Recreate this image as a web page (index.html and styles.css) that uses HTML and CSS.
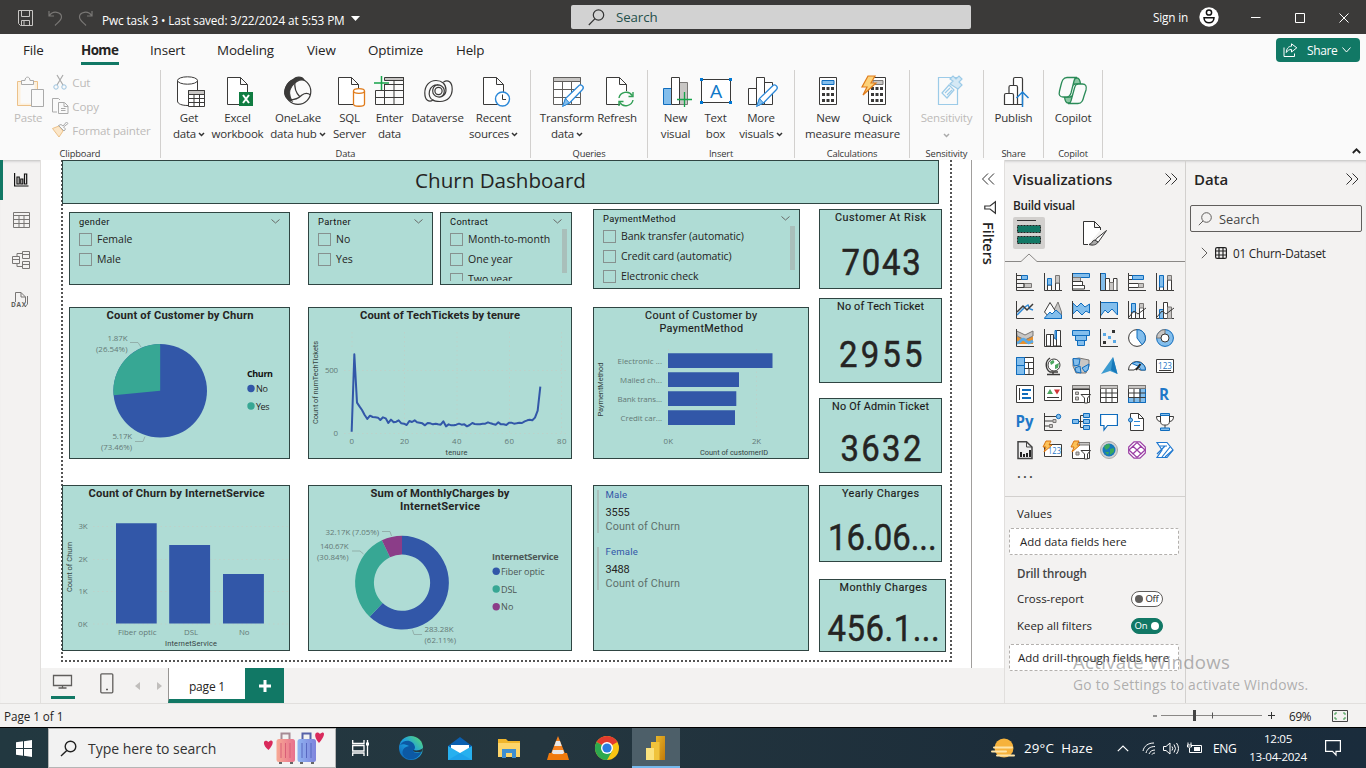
FILE: index.html
```html
<!DOCTYPE html>
<html lang="en">
<head>
<meta charset="utf-8">
<title>Pwc task 3</title>
<link rel="stylesheet" href="styles.css">
</head>
<body>
<svg class="defs" width="0" height="0">
  <defs>
    <path id="ax" class="k" d="M.5 0V17.5H18"/>
    <path id="chev" d="M1 1l2.5 2.5L6 1" fill="none" stroke="#333" stroke-width="1.5"/>
    <path id="page" d="M.5 .5H13.5L20.5 7.5V27.5H.5ZM13.5 .5V7.5H20.5" fill="#fff" stroke="#3b3a39"/>
    <g id="pencil"><path d="M3 21L5 14L18 1.500a2.600 2.600 0 0 1 4 3.500L9 18.500Z" fill="#fff" stroke="#2b88d8" stroke-width="1.300"/><path d="M2 22L5 14L9 18.500Z" fill="#83beec" stroke="#2b88d8"/></g>
    <linearGradient id="edge" x1="0" y1="1" x2="1" y2="0"><stop offset="0" stop-color="#0b5cad"/><stop offset=".5" stop-color="#1d9ee0"/><stop offset="1" stop-color="#5fe06a"/></linearGradient>
    <linearGradient id="pbi" x1="0" y1="0" x2="1" y2="1"><stop offset="0" stop-color="#e8b62a"/><stop offset="1" stop-color="#c27a0a"/></linearGradient>
    <linearGradient id="pink" x1="0" x2="1"><stop offset="0" stop-color="#f7a994"/><stop offset="1" stop-color="#e8718e"/></linearGradient>
    <linearGradient id="peri" x1="0" x2="1"><stop offset="0" stop-color="#8fb4f2"/><stop offset="1" stop-color="#7f84dc"/></linearGradient>
  </defs>
</svg>

<header class="titlebar">
  <div class="quick">
    <svg width="15" height="16" viewBox="0 0 15 16" fill="none" stroke="#c8c6c4"><path d="M.5 .5H14.500V15.500H2.500L.5 13.500ZM3.500 .5V6.500H11.500V.5M3.500 15V10.500H11.500V15M6 11V15"/></svg>
    <svg width="15" height="16" viewBox="0 0 15 16" fill="none" stroke="#797775" stroke-width="1.200"><path d="M1 1V6H6M1.500 5.500C5 0 13.500 2 13.500 7C13.500 10 11 11.500 7 15.500"/></svg>
    <svg width="15" height="16" viewBox="0 0 15 16" fill="none" stroke="#797775" stroke-width="1.200"><path d="M14 1V6H9M13.500 5.500C10 0 1.500 2 1.500 7C1.500 10 4 11.500 8 15.500"/></svg>
  </div>
  <span class="doc">Pwc task 3 • Last saved: 3/22/2024 at 5:53 PM</span>
  <svg class="doc-caret" width="9" height="5"><path d="M0 0H9L4.500 5Z" fill="#fff"/></svg>
  <div class="top-search"><svg width="17" height="17" viewBox="0 0 17 17" fill="none" stroke="#333" stroke-width="1.200"><circle cx="10.500" cy="6" r="5.200"/><path d="M6.800 9.800L.8 16"/></svg><span>Search</span></div>
  <span class="signin">Sign in</span>
  <svg class="avatar" width="20" height="20"><circle cx="10" cy="10" r="9.700" fill="#fff"/><circle cx="10" cy="5.500" r="2.600" fill="none" stroke="#111" stroke-width="1.500"/><path d="M5 10.800H15C15 17.500 5 17.500 5 10.800Z" fill="none" stroke="#111" stroke-width="1.500"/></svg>
  <svg class="winbtns" width="100" height="12" fill="none" stroke="#fff"><path d="M0 5.500H9.500M44.500 1.500H53.500V10.500H44.500ZM88.500 1.500L97.500 10.500M97.500 1.500L88.500 10.500"/></svg>
</header>

<nav class="tabs">
  <span class="tab t-file">File</span><span class="tab t-home">Home</span><span class="tab t-insert">Insert</span><span class="tab t-model">Modeling</span><span class="tab t-view">View</span><span class="tab t-opt">Optimize</span><span class="tab t-help">Help</span>
  <button class="share"><svg width="15" height="14" viewBox="0 0 15 14" fill="none" stroke="#fff"><path d="M1 4.500V13.500H11.500V10.500M8.500 .8L13.800 4.800L8.500 9V6.500C6 6.500 4.500 7.500 3.300 9.500C3.500 5.500 5.500 3.300 8.500 3.200Z"/></svg><span>Share</span><svg width="9" height="6"><path d="M.5 .5L4.500 5L8.500 .5" fill="none" stroke="#fff"/></svg></button>
</nav>

<section class="ribbon">
  <div class="group g-clip">
    <div class="clip">
      <div class="btn off"><svg class="ico" width="28" height="32"><path d="M.5 5.500H20.500V29.500H.5Z" fill="#fdf0dc" stroke="#ecc189"/><path d="M3.500 8.500H17.500V27.500H3.500Z" fill="#fafafa"/><path d="M4.500 8.500V4.500H8C8 0 13 0 13 4.500H16.500V8.500Z" fill="#fafafa" stroke="#aaa"/><path d="M14.500 13.500H26.500V30.500H14.500Z" fill="#fafafa" stroke="#aaa"/></svg><span>Paste</span></div>
      <div class="clip-list">
        <span><svg width="16" height="16" fill="none"><path d="M5 1L11 11M11 1L5 11" stroke="#aaa" stroke-width="1.200"/><circle cx="4" cy="13" r="2.200" stroke="#9cc3df"/><circle cx="12" cy="13" r="2.200" stroke="#9cc3df"/></svg>Cut</span>
        <span><svg width="17" height="16" fill="none" stroke="#aaa"><path d="M5 14H.5V.5H6.500L8 2M6.500 4.500H12.500L16 8V15.500H6.500ZM12 5V8.500H16M9 10.500H13.500M9 12.500H13.500"/></svg>Copy</span>
        <span><svg width="17" height="16" fill="none"><path d="M.5 6.500L7 4L11 9L7 15Z" fill="#fbe6c8" stroke="#ecc189"/><path d="M6.500 3.500L12 9L13.500 7L11.500 5L16 1.500L14.500 0L11 4L9 2.500Z" fill="#fafafa" stroke="#aaa"/></svg>Format painter</span>
      </div>
    </div>
    <label>Clipboard</label>
  </div>
  <div class="group g-data">
    <div class="row">
      <div class="btn"><svg class="ico r2" width="28" height="32" fill="#fff" stroke="#3b3a39"><path d="M.5 4.500V25C.5 28 5 29.500 11 29.500V29.500H20.500V4.500"/><ellipse cx="10.500" cy="4.500" rx="10" ry="3.700"/><path d="M11.500 14.500H27.500V30.500H11.500Z"/><path d="M11.500 14.500H27.500V18.500H11.500Z" fill="#c8c6c4"/><path d="M11.500 22.500H27.500M11.500 26.500H27.500M17 18V30.500M22.500 18V30.500"/></svg><span>Get</span><span>data<svg class="cv" width="7" height="5"><use href="#chev"/></svg></span></div>
      <div class="btn"><svg class="ico r3" width="28" height="32"><use href="#page" y="1"/><path d="M12 16H26V30H12Z" fill="#107c41"/><path d="M16 19L22 27M22 19L16 27" stroke="#fff" stroke-width="2"/></svg><span>Excel</span><span>workbook</span></div>
      <div class="btn"><svg class="ico" width="28" height="30" stroke="#3b3a39" stroke-width="1.200"><circle cx="14" cy="15.500" r="12.800" fill="#fafafa"/><path d="M9 4C12 0 18 0 20 4C15 3 11 6 8 10C5 14 5 20 8 25C1 23-1 17 2 11C4 7 6 5 9 4Z" fill="#3b3a39"/><path d="M11 5C10 12 12 17 16 21M5 24C12 24 16 21 18 19C21 17 24 17 26.500 19" fill="none"/></svg><span>OneLake</span><span>data hub<svg class="cv" width="7" height="5"><use href="#chev"/></svg></span></div>
      <div class="btn"><svg class="ico r2" width="28" height="32"><use href="#page" y="1"/><path d="M15.500 15V28C15.500 31 26.500 31 26.500 28V15" fill="#fff" stroke="#e07b1a" stroke-width="1.300"/><ellipse cx="21" cy="15" rx="5.500" ry="2.300" fill="#fff" stroke="#e07b1a" stroke-width="1.300"/></svg><span>SQL</span><span>Server</span></div>
      <div class="btn"><svg class="ico l1" width="30" height="32" fill="none" stroke="#3b3a39"><path d="M1.500 14.500H29.500V28.500H1.500ZM1.500 21.500H29.500M10.500 8V28.500M20 5V28.500M29.500 1V28.500M11 8.500H29.500"/><path d="M10.500 1.500H29.500V4.500H10.500Z" fill="#c8c6c4"/><path d="M7.500 0V14M0 7H15" stroke="#16a34a" stroke-width="1.500"/></svg><span>Enter</span><span>data</span></div>
      <div class="btn"><svg class="ico r1" width="29" height="30" fill="none" stroke="#3b3a39" stroke-width="1.200"><circle cx="14.500" cy="15" r="3.600"/><path d="M14.500 9C8 9 7 17 11.500 20C16 22.500 22 20 22 14C22 8 18 4.500 12 4.500C5 4.500 .8 10 .8 17C.8 24 5 27 9 24C6 23 4.500 19 5.500 15C6.500 11 10 8.500 14.500 9M14.500 21C21 21 22 13 17.500 10C15 8.500 12 8.700 10 10.500M9 24C10 25 13 25.500 16 25.500C24 25.500 28.200 20 28.200 13C28.200 6 24 3 19.500 6"/></svg><span>Dataverse</span></div>
      <div class="btn"><svg class="ico r3" width="28" height="32"><use href="#page" y="1"/><circle cx="19.500" cy="23" r="7" fill="#fff" stroke="#2b88d8" stroke-width="1.400"/><path d="M19.500 18.500V23.500H23" fill="none" stroke="#3b3a39"/></svg><span>Recent</span><span>sources<svg class="cv" width="7" height="5"><use href="#chev"/></svg></span></div>
    </div>
    <label>Data</label>
  </div>
  <div class="group g-query">
    <div class="row">
      <div class="btn"><svg class="ico r1" width="30" height="32" fill="#fff" stroke="#605e5c"><path d="M.5 1.500H27.500V28.500H.5Z"/><path d="M.5 1.500H27.500V5.500H.5Z" fill="#c8c6c4"/><path d="M.5 13.500H27.500M.5 21.500H27.500M9.500 5V28M18.500 5V28"/><use href="#pencil" x="7.500" y="8.500"/></svg><span>Transform</span><span>data<svg class="cv" width="7" height="5"><use href="#chev"/></svg></span></div>
      <div class="btn"><svg class="ico r3" width="28" height="32"><use href="#page" y="1"/><circle cx="20" cy="23" r="8" fill="#fafafa"/><path d="M13 22C14 16 23 14 26 19.500M27 16V20.500H22.500M27 24C26 30 17 32 14 26.500M13 30V25.500H17.500" fill="none" stroke="#2f9e54" stroke-width="1.400"/></svg><span>Refresh</span></div>
    </div>
    <label>Queries</label>
  </div>
  <div class="group g-insert">
    <div class="row">
      <div class="btn"><svg class="ico r2" width="29" height="32"><path d="M.5 12.500H8.500V28.500H.5Z" fill="#83beec" stroke="#0f6cbd"/><path d="M16.500 6.500H24.500V28.500H16.500Z" fill="#c8c6c4" stroke="#797775"/><path d="M8.500 1.500H16.500V28.500H8.500Z" fill="#fff" stroke="#3b3a39"/><path d="M21.500 16V31M14 23.500H29" stroke="#16a34a" stroke-width="1.300"/></svg><span>New</span><span>visual</span></div>
      <div class="btn"><svg class="ico" width="32" height="32"><path d="M1.500 3.500H30.500V26.500H1.500Z" fill="#fff" stroke="#3b3a39"/><path d="M0 2h3v3H0zM29 2h3v3H29zM0 25h3v3H0zM29 25h3v3H29z" fill="#0078d4"/><text x="10" y="22" font-size="19" fill="#0f78c8" textLength="12" lengthAdjust="spacingAndGlyphs">A</text></svg><span>Text</span><span>box</span></div>
      <div class="btn"><svg class="ico r1" width="29" height="32" fill="#fff" stroke="#3b3a39"><path d="M.5 12.500H8.500V28.500H.5ZM16.500 6.500H24.500V28.500H16.500ZM8.500 1.500H16.500V28.500H8.500Z"/><use href="#pencil" x="6.500" y="8.500"/></svg><span>More</span><span>visuals<svg class="cv" width="7" height="5"><use href="#chev"/></svg></span></div>
    </div>
    <label>Insert</label>
  </div>
  <div class="group g-calc">
    <div class="row">
      <div class="btn"><svg class="ico" width="18" height="32"><path d="M.5 1.500H17.500V28.500H.5Z" fill="#fff" stroke="#3b3a39"/><path d="M3 4.500H15V8.500H3Z" fill="#83beec" stroke="#0f6cbd"/><path d="M3 12.500H15M3 18.500H15M3 24.500H15" stroke="#3b3a39" stroke-width="3" stroke-dasharray="3 1.500"/></svg><span>New</span><span>measure</span></div>
      <div class="btn"><svg class="ico" width="27" height="32"><path d="M4.500 1.500H21.500V28.500H4.500Z" fill="#fff" stroke="#3b3a39"/><path d="M9 4.500H19V8.500H9Z" fill="#c8c6c4" stroke="#797775"/><path d="M7 12.500H19M7 18.500H19M7 24.500H19" stroke="#3b3a39" stroke-width="3" stroke-dasharray="3 1.500"/><path d="M4 0H11L7 7H12L-1 19L3 11H-2Z" fill="#fcd27a" stroke="#e07b1a" stroke-width="1.200"/></svg><span>Quick</span><span>measure</span></div>
    </div>
    <label>Calculations</label>
  </div>
  <div class="group g-sens">
    <div class="row">
      <div class="btn off"><svg class="ico r3" width="26" height="32" fill="#fafafa" stroke="#9ccbe8" stroke-width="1.200"><path d="M1.500 1.500H20.500V28.500H1.500Z"/><path d="M5 17L12 9L17 14L10 22ZM8 17L13 12M10 19L15 14" /><path d="M13 8L16 5L13 3L16 0L19 3L22 0L25 3L22 6L25 9L21 13Z" fill="#d5e9f5"/></svg><span>Sensitivity</span><span class="solo"><svg class="cv" width="7" height="5" opacity=".4"><use href="#chev"/></svg></span></div>
    </div>
    <label>Sensitivity</label>
  </div>
  <div class="group g-share">
    <div class="row">
      <div class="btn"><svg class="ico r2" width="26" height="32" fill="#fff" stroke="#3b3a39" stroke-width="1.200"><path d="M10.500 28.500V3C10.500 1.500 11 1.500 12 1.500H18C19 1.500 19.500 2 19.500 3V28.500Z"/><path d="M6 28.500V11C6 9.500 6.500 9.500 7.500 9.500H13C14.500 9.500 14.500 10 14.500 11V28.500Z"/><path d="M1.500 28.500V19C1.500 17.500 2 17.500 3 17.500H9C10 17.500 10.500 18 10.500 19V28.500Z"/><path d="M19.500 31V16M13.500 22L19.500 16L25.500 22" fill="none" stroke="#1f7fd0" stroke-width="1.500"/></svg><span>Publish</span></div>
    </div>
    <label>Share</label>
  </div>
  <div class="group g-copilot">
    <div class="row">
      <div class="btn"><svg class="ico" width="30" height="30" stroke="#2a8a57" stroke-width="1.300"><path d="M15 2H19C21 2 22 4 22.500 8H17C15 8 14.500 9 14 11Z M14 27H10C8 27 7 25 6.500 21H12C14 21 14.500 20 15 18Z" fill="#8cc7a4"/><path d="M17 1.500H9C5 1.500 4 5 3 9L1.500 15C.5 19 2 21 5 21H9C11 21 12 20 13 17L16 5C16.500 3 17 1.500 19 1.500ZM12 27.500H20C24 27.500 25 24 26 20L28 14C29 10 27.500 8 24.500 8H20.500C18 8 17.500 9 16.500 12L13.500 23C13 26 12 27.500 10 27.500Z" fill="#fafafa"/></svg><span>Copilot</span></div>
    </div>
    <label>Copilot</label>
  </div>
  <svg class="collapse" width="9" height="6"><path d="M.8 5L4.500 1.300L8.200 5" fill="none" stroke="#222" stroke-width="1.800"/></svg>
</section>

<main class="work">
  <aside class="rail">
    <div class="active"><svg width="15" height="14" fill="none" stroke="#111" stroke-width="1.200"><path d="M.6 0V13H14.500M3 4H5.200V11H3ZM6.800 6H8.800V11H6.800ZM10.500 1H12.700V11H10.500Z"/></svg></div>
    <div><svg width="17" height="16" fill="none" stroke="#797775"><path d="M.5 .5H16.500V15.500H.5ZM.5 3.500H16.500M.5 7.500H16.500M.5 11.500H16.500M6 3V15.500M11 3V15.500"/></svg></div>
    <div><svg width="18" height="18" fill="none" stroke="#797775"><path d="M.5 5.500H7.500V12.500H.5ZM.5 8.500H7.500M10.500 .5H17.500V7.500H10.500ZM10.500 3.500H17.500M10.500 10.500H17.500V17.500H10.500ZM10.500 13.500H17.500M5 5V2.500H10.500M5 13V15.500H10.500"/></svg></div>
    <div><svg width="18" height="18" fill="none" stroke="#797775"><path d="M4.500 11V1.500H10L14.500 6V11M10 1.500V6H14.500M16.500 5V13L14 16"/><text x="0" y="16" font-size="6.500" font-weight="700" fill="#605e5c" stroke="none" textLength="15">DAX</text></svg></div>
  </aside>

  <div class="center">
    <div class="stage">
    <div class="canvas">
      <svg class="frame" width="892" height="504"><path d="M1 0V502M0 501H891M890 0V502" fill="none" stroke="#555" stroke-width="2" stroke-dasharray="2 2"/></svg>
      <div class="v banner">Churn Dashboard</div>

      <div class="v slicer s-gender"><h3>gender<svg width="9" height="5"><path d="M.5 .5L4.500 4L8.500 .5"/></svg></h3><ul><li>Female</li><li>Male</li></ul></div>
      <div class="v slicer s-partner"><h3>Partner<svg width="9" height="5"><path d="M.5 .5L4.500 4L8.500 .5"/></svg></h3><ul><li>No</li><li>Yes</li></ul></div>
      <div class="v slicer s-contract"><h3>Contract<svg width="9" height="5"><path d="M.5 .5L4.500 4L8.500 .5"/></svg></h3><ul><li>Month-to-month</li><li>One year</li><li>Two year</li></ul><i class="sb"></i></div>
      <div class="v slicer s-pay"><h3>PaymentMethod<svg width="9" height="5"><path d="M.5 .5L4.500 4L8.500 .5"/></svg></h3><ul><li>Bank transfer (automatic)</li><li>Credit card (automatic)</li><li>Electronic check</li></ul><i class="sb"></i></div>

      <div class="v pie"><svg viewBox="70 308 219 150">
        <text class="tb" x="106.500" y="319" textLength="147">Count of Customer by Churn</text>
        <circle cx="160.200" cy="390.800" r="46.800" fill="#3257a8"/><path d="M160.200 390.800V344A46.800 46.800 0 0 0 113.600 395.300Z" fill="#37a794"/>
        <g class="ld"><path d="M130 342.500H138L141 347M135 441.500H143L145 436.500"/></g>
        <g class="lb"><text x="107.500" y="341" textLength="20">1.87K</text><text x="96" y="352" textLength="31.500">(26.54%)</text><text x="112.500" y="439" textLength="19.500">5.17K</text><text x="101" y="450" textLength="31">(73.46%)</text></g>
        <text class="lg b" x="247" y="376.500" textLength="26">Churn</text>
        <circle cx="251" cy="388.500" r="3.700" fill="#3257a8"/><text class="lg" x="256" y="392" textLength="12">No</text>
        <circle cx="251" cy="406" r="3.700" fill="#37a794"/><text class="lg" x="256" y="410" textLength="13.500">Yes</text>
      </svg></div>

      <div class="v line"><svg viewBox="309 308 262 150">
        <text class="tb" x="360" y="319" textLength="160">Count of TechTickets by tenure</text>
        <path class="gr" d="M344 370.500H566M344 433.500H566M352 332V433M404.500 332V433M457 332V433M509.500 332V433M561.500 332V433"/>
        <g class="lb"><text x="325" y="373" textLength="13">500</text><text x="333.500" y="436">0</text><text x="349.500" y="444">0</text><text x="400" y="444" textLength="9">20</text><text x="452" y="444" textLength="9.500">40</text><text x="504.500" y="444" textLength="9.500">60</text><text x="557" y="444" textLength="9.500">80</text></g>
        <text class="at" x="445.500" y="454.500" textLength="22">tenure</text><text class="at" transform="translate(318 424) rotate(-90)" textLength="83">Count of numTechTickets</text>
        <g transform="translate(300 160) scale(.33333)"><polyline fill="none" stroke="#3257a8" stroke-width="6" stroke-linejoin="round" points="155,815 163,583 171,728 179,740 186,750 194,765 202,777 210,767 218,771 226,772 234,773 241,780 249,772 257,775 265,789 273,779 281,787 289,785 296,781 304,790 312,791 320,795 328,783 336,786 344,781 351,787 359,788 367,790 375,796 383,789 391,790 399,793 407,791 414,793 422,794 430,784 438,799 446,793 454,796 462,796 469,794 477,791 485,794 493,793 501,799 509,795 517,789 524,792 532,793 540,793 548,791 556,791 564,787 572,790 579,792 587,794 595,787 603,793 611,793 619,795 627,788 634,788 642,791 650,790 658,788 666,789 674,784 682,781 689,779 697,781 705,773 713,752 721,680"/></g>
      </svg></div>

      <div class="v bars"><svg viewBox="594 308 214 150">
        <text class="tm" x="645" y="319" textLength="112">Count of Customer by</text><text class="tm" x="659.500" y="332" textLength="83.500">PaymentMethod</text>
        <path class="gr" d="M668.500 349V432M756.500 349V432"/>
        <path fill="#3257a8" d="M668 353.300h104.500v14.700H668zM668 372.300h71v14.700H668zM668 391.300h68.300v14.700H668zM668 410.300h67v14.700H668z"/>
        <g class="lb"><text x="617.500" y="364" textLength="44.500">Electronic ...</text><text x="620" y="383" textLength="42">Mailed ch...</text><text x="617.500" y="402" textLength="44.500">Bank trans...</text><text x="620.500" y="421" textLength="41.500">Credit car...</text><text x="663.500" y="444" textLength="9.500">0K</text><text x="752" y="444" textLength="9">2K</text></g>
        <text class="at" x="700" y="455" textLength="68">Count of customerID</text><text class="at" transform="translate(603 416.500) rotate(-90)" textLength="54">PaymentMethod</text>
      </svg></div>

      <div class="v cols"><svg viewBox="63 486 226 164">
        <text class="tb" x="88.500" y="497" textLength="176">Count of Churn by InternetService</text>
        <path class="gr" d="M93 526.500H288M93 559.500H288M93 591.500H288M93 624H288"/>
        <path fill="#3257a8" d="M116 523.200h40.700V623.500H116zM169.200 545h40.900v78.500h-40.900zM223 574h40.900v49.500H223z"/>
        <g class="lb"><text x="78.500" y="529" textLength="9">3K</text><text x="78.500" y="562" textLength="9">2K</text><text x="78.500" y="594" textLength="9">1K</text><text x="78" y="627" textLength="9.500">0K</text><text x="118" y="635" textLength="38.500">Fiber optic</text><text x="184" y="635" textLength="14">DSL</text><text x="239" y="635" textLength="10.500">No</text></g>
        <text class="at" x="165" y="646" textLength="52">InternetService</text><text class="at" transform="translate(72 592) rotate(-90)" textLength="50">Count of Churn</text>
      </svg></div>

      <div class="v donut"><svg viewBox="309 486 262 164">
        <text class="tb" x="370.500" y="497" textLength="139">Sum of MonthlyCharges by</text><text class="tb" x="400" y="510" textLength="80">InternetService</text>
        <path fill="#3257a8" d="M402 535.800A46.900 46.900 0 1 1 369.700 616.700L382.600 603A28.100 28.100 0 1 0 402 554.600Z"/>
        <path fill="#37a794" d="M369.700 616.700A46.900 46.900 0 0 1 381.900 540.300L390 557.300A28.100 28.100 0 0 0 382.600 603Z"/>
        <path fill="#8b3d88" d="M381.900 540.300A46.900 46.900 0 0 1 402 535.800V554.600A28.100 28.100 0 0 0 390 557.300Z"/>
        <g class="ld"><path d="M382 531.500H390L391.500 536M352 551H360L363.500 554M412.500 630L414 634.500H422"/></g>
        <g class="lb"><text x="325.500" y="535" textLength="53.500">32.17K (7.05%)</text><text x="320" y="549" textLength="28.500">140.67K</text><text x="317" y="560" textLength="31.500">(30.84%)</text><text x="424.500" y="632" textLength="29">283.28K</text><text x="424.500" y="643" textLength="31.500">(62.11%)</text></g>
        <text class="lg b gy" x="492" y="560" textLength="66.500">InternetService</text>
        <circle cx="496.200" cy="571.300" r="3.700" fill="#3257a8"/><circle cx="496.200" cy="589" r="3.700" fill="#37a794"/><circle cx="496.200" cy="606.700" r="3.700" fill="#8b3d88"/>
        <text class="lg gy" x="501" y="575" textLength="43.500">Fiber optic</text><text class="lg gy" x="501" y="593" textLength="16">DSL</text><text class="lg gy" x="501" y="610" textLength="12.500">No</text>
      </svg></div>

      <div class="v multi">
        <div class="entry"><b>Male</b><strong>3555</strong><span>Count of Churn</span></div>
        <div class="entry"><b>Female</b><strong>3488</strong><span>Count of Churn</span></div>
      </div>

      <div class="v c1"><svg viewBox="820 210 121 78"><text class="tm" x="835" y="221" textLength="91">Customer At Risk</text><text class="num" transform="translate(841.500 275) scale(.87 1)" textLength="91">7043</text></svg></div>
      <div class="v c2"><svg viewBox="820 299 121 83"><text class="tm" x="837" y="310" textLength="87">No of Tech Ticket</text><text class="num" transform="translate(839 367) scale(.87 1)" textLength="96">2955</text></svg></div>
      <div class="v c3"><svg viewBox="820 399 121 73"><text class="tm" x="832" y="410" textLength="97">No Of Admin Ticket</text><text class="num" transform="translate(840.500 461) scale(.87 1)" textLength="93">3632</text></svg></div>
      <div class="v c4"><svg viewBox="820 486 121 75"><text class="tm" x="842" y="497" textLength="77">Yearly Charges</text><text class="num" transform="translate(828 550) scale(.87 1)" textLength="125">16.06...</text></svg></div>
      <div class="v c5"><svg viewBox="820 580 125 71"><text class="tm" x="839.500" y="591" textLength="87.500">Monthly Charges</text><text class="num" transform="translate(827.500 641) scale(.87 1)" textLength="129">456.1...</text></svg></div>
    </div>
    <div class="filters">
      <svg width="13" height="12" fill="none" stroke="#333"><path d="M6 .5L.5 6L6 11.500M12 .5L6.500 6L12 11.500"/></svg>
      <svg class="funnel" width="12" height="13" fill="none" stroke="#333" stroke-width="1.200"><path d="M11.400 .8V12.200L6 8H.8V5H6Z"/></svg>
      <span>Filters</span>
    </div>
    </div>
    <div class="pagebar">
      <div class="desk"><svg width="22" height="15" fill="none" stroke="#605e5c" stroke-width="1.300"><path d="M1.500 1.500H19.500V11.500H1.500ZM10.500 12V14M6.500 14H14.500"/></svg></div>
      <svg class="phone" width="14" height="21" fill="none" stroke="#605e5c" stroke-width="1.300"><rect x=".8" y=".8" width="12" height="19" rx="1"/><path d="M6 16.500h2"/></svg>
      <svg class="arrows" width="28" height="8" fill="#c0bebc"><path d="M5 0V8L0 4ZM22 0V8L27 4Z"/></svg>
      <div class="ptab">page 1</div>
      <div class="plus"><svg width="12" height="12"><path d="M6 0V12M0 6H12" stroke="#fff" stroke-width="3"/></svg></div>
    </div>
  </div>

  <aside class="viz">
    <h2><span>Visualizations</span><svg width="13" height="12" fill="none" stroke="#333"><path d="M.5 .5L6 6L.5 11.500M6.500 .5L12 6L6.500 11.500"/></svg></h2>
    <h4>Build visual</h4>
    <div class="modes">
      <div class="mode"><svg width="24" height="26"><path d="M0 .5H19" stroke="#333"/><path d="M.5 5.500H23.500V12.500H.5ZM.5 16.500H23.500V23.500H.5Z" fill="#117865" stroke="#222" stroke-dasharray="2 1"/></svg></div>
      <svg width="25" height="25" fill="#fff" stroke="#333"><path d="M5 23.500H.5V.5H11.500L17.500 6.500V9M11.500 .5V6.500H17.500"/><path d="M23.500 9.500L13.500 17.500L12 20L15 21.500Z"/><path fill="#aaa" d="M12 19C9 19 9.500 23 6 23.500C10 25 14 23.500 15 21Z"/></svg>
    </div>
    <svg class="notch" width="180" height="9" fill="none" stroke="#8a8886"><path d="M0 8.500H16L24 1L32 8.500H180"/></svg>
    <div class="icons">
      <svg><use href="#ax"/><path class="b" d="M5.500 2.500H11.500V6.500H5.500Z"/><path class="g" d="M8 10.500H15.500V14.500H8Z"/><path class="k" d="M.5 2.500H5.500M.5 6.500H5.500M.5 10.500H8V14.500H.5"/></svg>
      <svg><use href="#ax"/><path class="w" d="M3.500 12H7.500V17.500H3.500ZM11.500 10H15.500V17.500H11.500Z"/><path class="b" d="M3.500 5.500H7.500V12H3.500Z"/><path class="g" d="M11.500 2.500H15.500V10H11.500Z"/></svg>
      <svg><path class="b" d="M.5 .5H17.500V4.500H.5Z"/><path class="g" d="M.5 4.500H8.500V8.500H.5Z"/><path class="w" d="M.5 8.500H10.500V12.500H.5ZM.5 12.500H12.500V16H.5Z"/><use href="#ax"/></svg>
      <svg><path class="b" d="M.5 .5H5.500V17.500H.5Z"/><path class="w" d="M5.500 5.500H9.500V17.500H5.500ZM13.500 5.500H17V17.500H13.500Z"/><path class="g" d="M9.500 9.500H13.500V17.500H9.500Z"/><use href="#ax"/></svg>
      <svg><use href="#ax"/><path class="w" d="M.5 2.500H5V6.500H.5ZM.5 10.500H11V14.500H.5Z"/><path class="b" d="M4.500 2.500H15.500V6.500H4.500Z"/><path class="g" d="M10.500 10.500H15.500V14.500H10.500Z"/></svg>
      <svg><use href="#ax"/><path class="w" d="M3.500 13H7.500V17.500H3.500ZM11.500 7H15.500V17.500H11.500Z"/><path class="b" d="M3.500 2.500H7.500V14H3.500Z"/><path class="g" d="M11.500 2.500H15.500V7H11.500Z"/></svg>

      <svg><path d="M1 14L7 8L9 6L12 4L14 8L17 9" fill="none" stroke="#2b88d8" stroke-width="1.500"/><path class="k" stroke-width="1.500" d="M1 11L7 5L11 9L17 3"/><use href="#ax"/></svg>
      <svg><path class="g" d="M8 13L14 1L17.500 11V17.500H8Z"/><path class="w" d="M.5 11L6 1.500L12 11L6 17Z"/><path class="b" d="M.5 17L6 11L8 13L12 9L17.500 14V17.500H.5Z"/></svg>
      <svg><path class="b" d="M.8 2L5 6L9 2L13 6L17.500 3V12L14 10L10 14L5 9L.8 13Z"/><use href="#ax"/></svg>
      <svg><path class="b" d="M.5 1.500H17.500V14L12 8L8 12L5 9L.5 15Z"/><use href="#ax"/></svg>
      <svg><use href="#ax"/><path class="w" d="M3.500 9H7.500V17.500H3.500ZM11.500 6H15.500V17.500H11.500Z"/><path class="b" d="M3.500 2.500H7.500V11H3.500Z"/><path class="g" d="M11.500 2.500H15.500V7H11.500Z"/><path class="k" d="M1 16L6 10L10 13L18 7"/></svg>
      <svg><use href="#ax"/><path class="b" d="M3.500 8.500H7.500V17.500H3.500Z"/><path class="w" d="M7.500 1.500H11.500V17.500H7.500Z"/><path class="g" d="M11.500 6H15.500V17.500H11.500Z"/><path class="k" d="M1 16L6 10L10 13L18 7"/></svg>

      <svg><path fill="#e8912d" d="M1 8H17V15H1Z"/><path class="g" d="M.5 2L5 4L9 6L17 2V7L9 11L1 7Z"/><path d="M1 14C6 13 5 8 9 11C13 15 13 14 17 12" fill="none" stroke="#5aa9e6" stroke-width="3"/><use href="#ax"/></svg>
      <svg><use href="#ax"/><path class="w" d="M2.500 5.500H6.500V17H2.500ZM9.500 9H12.500V17H9.500ZM12.500 1.500H16.500V17H12.500Z"/><path class="k" d="M6 5.500H9.500V17"/><path class="b" d="M11 1.500H12.500V10H11Z"/></svg>
      <svg><path class="b" d="M.5 1.500H17.500V6.500H.5ZM3.500 6.500H14.500V11.500H3.500ZM5.500 11.500H12.500V16.500H5.500Z"/></svg>
      <svg><use href="#ax"/><path fill="#333" d="M12 1h3v3h-3zM3 12h3v3H3z"/><path fill="#5aa9e6" d="M3 4h3v3H3zM8 7h3v3H8zM13 11h3v3h-3z"/></svg>
      <svg><circle class="w" cx="9" cy="9" r="8.400"/><path class="b" d="M9 9V.6A8.400 8.400 0 0 1 14 15.700Z"/></svg>
      <svg><circle class="b" cx="9" cy="9" r="8.400"/><path class="g" d="M9 .6A8.400 8.400 0 0 0 .6 9H5A4 4 0 0 1 9 5Z"/><circle class="w" cx="9" cy="9" r="4"/></svg>

      <svg><path class="w" d="M.5 .5H17.500V17.500H.5Z"/><path class="b" d="M.5 .5H8.500V8.500H.5ZM.5 8.500H8.500V17.500H.5Z"/><path class="k" d="M8.500 5.500H17.500M8.500 11.500H17.500M13 11.500V17.500M12.500 5.500V11.500"/></svg>
      <svg><circle class="w" cx="10" cy="8" r="6"/><path fill="#4da660" d="M6 5C9 2 11 3 10 6L7 8ZM11 8L15 6L14 11L11 12Z"/><path class="k" stroke-width="1.400" d="M6 1C1 4 1 12 6 15H14M9 15V17.500M3 17.500H16"/></svg>
      <svg><path class="g" d="M1 2L7 1L17 3V9L14 16L4 16L1 9Z"/><path class="b" d="M1 1.500L8 2L7 8L2 9ZM10 11L17 7L16 13L13 15ZM3 11L8 9L9 16L4 15Z"/></svg>
      <svg><path d="M13 0L17.500 17L10 14L1 17Z" fill="#3d9bd0"/><path d="M13 0L17.500 17L11 13Z" fill="#1779ba"/></svg>
      <svg><path class="w" d="M.5 13A8.500 8.500 0 0 1 17.500 13H12L9 11L6 13Z"/><path class="b" d="M4 6.500A8.500 8.500 0 0 1 17.500 13H13L11 9.500Z"/><path d="M8 13L12.500 7" stroke="#222" stroke-width="2"/></svg>
      <svg><path class="w" d="M.5 2.500H17.500V15.500H.5Z"/><text x="2" y="11.500" font-size="9" fill="#1f78c8" textLength="14" lengthAdjust="spacingAndGlyphs">123</text><path class="k" d="M3 13.500H15"/></svg>

      <svg><path class="w" d="M.5 .5H17.500V17.500H.5Z"/><path class="k" d="M3.500 3V15"/><path d="M6 5H15M6 9H12M6 13H15" stroke="#0f6cbd" stroke-width="2"/></svg>
      <svg><path class="w" d="M.5 1.500H17.500V15.500H.5Z"/><path d="M3 9L6 4L9 9Z" fill="#4da660"/><path d="M10 4.500H16L13 9.500Z" fill="#d13438"/><path class="k" d="M3 12.500H15"/></svg>
      <svg><path class="w" d="M.5 .5H17.500V4.500H.5ZM.5 4.500H17.500V17.500H.5Z"/><path class="g" d="M.5 .5H17.500V3.500H.5ZM3.500 7H6.500V9.500H3.500ZM3.500 12H6.500V15H3.500Z"/><path class="w" d="M9 9.500H18.500L15.500 13V18H12.500V13Z"/></svg>
      <svg><path class="w" d="M.5 .5H17.500V17.500H.5Z"/><path class="g" d="M.5 .5H17.500V3.500H.5Z"/><path class="k" d="M.5 8H17.500M.5 12.500H17.500M6 4V17M12 4V17"/></svg>
      <svg><path class="w" d="M.5 .5H17.500V17.500H.5Z"/><path class="b" d="M12 3.500H17.500V17.500H.5V12.500H12Z"/><path class="g" d="M.5 .5H17.500V3.500H.5Z"/><path class="k" d="M.5 8H17.500M.5 12.500H17.500M6 4V17M12 4V17"/></svg>
      <svg><text x="3" y="15" font-size="16" font-weight="700" fill="#1f78c8" textLength="10" lengthAdjust="spacingAndGlyphs">R</text></svg>

      <svg><text x="-.5" y="14" font-size="16" font-weight="700" fill="#1f78c8" textLength="18" lengthAdjust="spacingAndGlyphs">Py</text></svg>
      <svg><use href="#ax"/><path class="k" d="M.5 3.500H14M.5 8H9M.5 13H6"/><circle class="b" cx="14.500" cy="3.500" r="2.200"/><path class="g" d="M9 6.500H12V9.500H9ZM5.500 11.500H8.500V14.500H5.500Z"/></svg>
      <svg><path class="k" d="M6 8.500H12M8.500 2.500V14.500M8.500 2.500H12M8.500 14.500H12"/><path class="b" d="M.5 6.500H6.500V10.500H.5ZM11.500 .5H17.500V4.500H11.500ZM11.500 6.500H17.500V10.500H11.500ZM11.500 12.500H17.500V16.500H11.500Z"/></svg>
      <svg><path fill="#fff" stroke="#0f6cbd" stroke-width="1.200" d="M.6 1.500H17.400V12.500H7.500L4 17V12.500H.6Z"/></svg>
      <svg><path class="w" d="M2.500 .5H10.500L15.500 5.500V17.500H2.500Z"/><path class="k" d="M10.500 .5V5.500H15.500"/><path d="M6 8.500H12M6 12.500H12" stroke="#2b88d8"/><circle class="b" cx="2.500" cy="7" r="2"/></svg>
      <svg><path class="w" d="M4.500 1.500H13.500V8C13.500 12 11 12 9 12C7 12 4.500 12 4.500 8ZM4.500 3.500H.5C.5 7 2 8.500 5 8.500M13.500 3.500H17.500C17.500 7 16 8.500 13 8.500M9 12V15"/><path class="b" d="M4.500 15H13.500V17.500H4.500ZM4.500 .5H13.500V2.500H4.500Z"/></svg>

      <svg><path d="M2 .8H10.500L16 6V17.500H2Z" fill="#eee" stroke="#444" stroke-width="1.500"/><path d="M10.500 1V6H16" fill="none" stroke="#444"/><path d="M5 16V11M8 16V13M11 16V12M14 16V9" stroke="#222" stroke-width="2"/></svg>
      <svg><path class="w" d="M.5 3.500H17.500V15.500H.5Z"/><text x="4" y="12.500" font-size="9" fill="#1f78c8" textLength="13" lengthAdjust="spacingAndGlyphs">123</text><path class="bolt" d="M2 0H7L5 4H8L0 11L2 6H-1Z"/></svg>
      <svg><path class="w" d="M2.500 1.500H17.500V17.500H.5V9"/><path class="g" d="M7 1.500H17.500V4H7ZM4 11H7V14H4Z"/><path class="w" d="M9 9.500H18.500L15.500 13V18H12.500V13Z"/><path class="bolt" d="M2 0H7L5 4H8L0 11L2 6H-1Z"/></svg>
      <svg><circle cx="9" cy="9" r="8.500" fill="#d2d2d2" stroke="#aaa"/><circle cx="9" cy="9" r="6.500" fill="#1779ba"/><path fill="#39a85b" d="M4 6C7 1 12 3 9 7L6 9ZM10 8L14 7L14 11L10 14ZM5 11L9 11L8 14Z"/></svg>
      <svg fill="#fff" stroke="#9b3fa5" stroke-width="1.200"><path d="M6 .8H12L17.300 6V12L12 17.200H6L.7 12V6Z"/><path d="M9 1.500L13 5.200L9 9L5 5.200ZM13 5.200L17 9L13 12.800L9 9ZM5 5.200L9 9L5 12.800L1 9ZM9 9L13 12.800L9 16.500L5 12.800Z"/></svg>
      <svg fill="#fff" stroke="#1f78d0" stroke-width="1.200"><path d="M1 1.500H11L17 9L11 16.500H1L6 9Z"/><path d="M4 5H11M1 13L9 5M6 16L14 6M9 16L17 9"/></svg>
    </div>
    <div class="dots">...</div>
    <div class="wells">
      <p>Values</p>
      <div class="well">Add data fields here</div>
      <h5>Drill through</h5>
      <div class="opt"><span>Cross-report</span><i class="tog"><i></i>Off</i></div>
      <div class="opt"><span>Keep all filters</span><i class="tog on">On<i></i></i></div>
      <div class="well low">Add drill-through fields here</div>
    </div>
  </aside>

  <aside class="data">
    <h2><span>Data</span><svg width="13" height="12" fill="none" stroke="#333"><path d="M.5 .5L6 6L.5 11.500M6.500 .5L12 6L6.500 11.500"/></svg></h2>
    <div class="dsearch"><svg width="14" height="14" fill="none" stroke="#605e5c"><circle cx="8.500" cy="5.500" r="4.800"/><path d="M5 9L.8 13.200"/></svg><span>Search</span></div>
    <div class="tree"><svg width="7" height="12" fill="none" stroke="#605e5c"><path d="M.8 .8L6 6L.8 11.200"/></svg><svg class="tbl" width="12" height="12" fill="none" stroke="#222" stroke-width="1.200"><rect x=".6" y=".6" width="10.800" height="10.800" rx="1.500"/><path d="M.6 4H11.400M.6 8H11.400M4 .6V11.400M8 .6V11.400"/></svg><span>01 Churn-Dataset</span></div>
  </aside>
  <div class="watermark"><div>Activate Windows</div><p>Go to Settings to activate Windows.</p></div>
</main>

<footer class="status">
  <span>Page 1 of 1</span>
  <div class="zoom"><svg width="118" height="12"><path d="M0 6H4M115 5.500H122M118.500 2V9" stroke="#333"/><path d="M8 5.500H109" stroke="#8a8886"/><path d="M59.500 2.500V8.500" stroke="#555"/><path d="M40 0H43V11H40Z" fill="#444"/></svg><span>69%</span><svg class="fit" width="16" height="12" fill="none" stroke="#3a9a4a"><path d="M.5 .5H15.500V11.500H.5Z" stroke="#444"/><path d="M3 5V3H5M11 3H13V5M13 7V9H11M5 9H3V7"/></svg></div>
</footer>

<div class="taskbar">
  <div class="start"><svg width="16" height="17" fill="#fff"><path d="M0 2.300L7 1.300V8H0ZM8 1.200L16 0V8H8ZM0 9H7V15.700L0 14.700ZM8 9H16V17L8 15.800Z"/></svg></div>
  <div class="tsearch">
    <svg width="17" height="17" fill="none" stroke="#222" stroke-width="1.400"><circle cx="10.500" cy="6.500" r="5.300"/><path d="M6.800 10.500L1 16"/></svg><span>Type here to search</span>
    <svg class="bags" width="64" height="36">
      <path d="M5.500 20C-2 14 1 8 5.500 12C9 8 13 12 5.500 20Z" fill="#d92b5c"/><path d="M56 13C49 5 53 0 57 4C61 0 64 4 56 13Z" fill="#d92b5c"/>
      <path d="M18.500 12V3.500H26.500V12" fill="none" stroke="#a58a94" stroke-width="2"/><path d="M39.500 12V3.500H47.500V12" fill="none" stroke="#5661a8" stroke-width="2"/>
      <rect x="13.500" y="9" width="18.500" height="23" rx="2.500" fill="url(#pink)"/><rect x="34.500" y="9" width="18.500" height="23" rx="2.500" fill="url(#peri)"/>
      <path d="M18 13V28M22.500 13V28M27 13V28" stroke="#d95f78"/><path d="M39 13V28M43.500 13V28M48 13V28" stroke="#5868c0"/><path d="M16 33h3M27 33h3M37 33h3M48 33h3" stroke="#666" stroke-width="2"/>
    </svg>
  </div>
  <svg class="ti tv" width="18" height="16" fill="none" stroke="#fff" stroke-width="1.300"><path d="M.7 0V3.500H12V0M.7 5.500H12V11H.7ZM.7 16V13H12V16M15.500 0V16"/><path d="M14 4h3" stroke-width="3"/></svg>
  <svg class="ti edge" width="24" height="24"><circle cx="12" cy="12" r="12" fill="url(#edge)"/><path d="M1 9C5 2 15 4 16 11C16 14 14 14 15 16C17 18 21 17 23 15C20 23 12 25 7 22C1 18 3 11 10 10C6 8 3 8 1 9Z" fill="#0c59a4"/><path d="M14 14C14.500 16 18 17.500 23.300 15.200L24 12C22 14 18 15 14 14Z" fill="#223640"/></svg>
  <svg class="ti mail" width="24" height="23"><path d="M0 9L12 0L24 9V23H0Z" fill="#0a5fb0"/><path d="M3 8H21V17H3Z" fill="#fff"/><path d="M0 9L12 16L24 9V23H0Z" fill="#27b0ef"/><path d="M0 23L12 16L24 23Z" fill="#1ea2ea"/></svg>
  <svg class="ti fold" width="22" height="20"><path d="M0 1H8L10 3H22V19H0Z" fill="#f0b52b"/><path d="M0 5H22V19H0Z" fill="#fdd56a"/><path d="M4 20V11H18V20H14V15H8V20Z" fill="#3e8ed0"/></svg>
  <svg class="ti vlc" width="22" height="24"><path d="M11 0L19 20H3Z" fill="#f58220"/><path d="M9 5H13L14.700 10H7.300ZM5.800 14H16.200L17.500 18H4.500Z" fill="#e8e8e8"/><path d="M2 17H5C8 20 14 20 17 17H20L22 24H0Z" fill="#f07a0c"/></svg>
  <svg class="ti chrome" width="24" height="24"><circle cx="12" cy="12" r="12" fill="#f9c513"/><path d="M12 12L1.600 6A12 12 0 0 1 22.400 6Z" fill="#e33b2e"/><path d="M12 12L1.600 6A12 12 0 0 0 12 24L17.200 15Z" fill="#2da94f"/><circle cx="12" cy="12" r="6" fill="#fff"/><circle cx="12" cy="12" r="4.600" fill="#2a7de1"/></svg>
  <div class="ti pbi"><svg width="20" height="24"><path d="M10 0H19V24H10Z" fill="url(#pbi)"/><path d="M5 6H13.500V24H5Z" fill="#f0c33c"/><path d="M0 12H8V24H0Z" fill="#fbe27e"/></svg></div>
  <div class="tray">
    <svg class="haze" width="24" height="20"><circle cx="12" cy="10" r="9.500" fill="#f6b23c"/><path d="M2 9.500H20M0 13.500H14M5 17.500H22" stroke="#fde3a7" stroke-width="2" stroke-linecap="round"/></svg>
    <span class="temp">29°C&nbsp; Haze</span>
    <svg class="up" width="12" height="7" fill="none" stroke="#fff" stroke-width="1.200"><path d="M.8 6.200L6 1L11.200 6.200"/></svg>
    <svg class="wifi" width="14" height="13" fill="none" stroke="#fff"><path d="M1 9C2 4 6 1 12 1M4 11C5 7 8 4.500 13 4.500M7 12C8 9.500 10 8 13 8M10 12.500C10.500 11.500 11.500 11 13 11" /></svg>
    <svg class="vol" width="17" height="13" fill="none" stroke="#fff"><path d="M.5 4.500H3L7 1V12L3 8.500H.5ZM9 4.500Q10.500 6.500 9 8.500M11 2.500Q14 6.500 11 10.500M13.500 1Q17.500 6.500 13.500 12"/></svg>
    <svg class="bat" width="16" height="12" fill="none" stroke="#fff"><path d="M5 3.500H14.500V10.500H2.500V6M1 .5V3M4 .5V3M.5 3H4.500V5H.5Z"/><path d="M7 5H13V9H7Z" fill="#fff" stroke="none"/></svg>
    <span class="eng">ENG</span>
    <div class="clock"><span>12:05</span><span>13-04-2024</span></div>
    <svg class="note" width="16" height="16" fill="none" stroke="#fff" stroke-width="1.200"><path d="M.6 .6H15.400V11.400H11V15L7.500 11.400H.6Z"/></svg>
  </div>
</div>
</body>
</html>
```
FILE: styles.css
```css
*{box-sizing:border-box}
body{margin:0;width:1366px;height:768px;overflow:hidden;font-family:"Open Sans","Noto Sans",sans-serif;font-size:12px;color:#252423;background:#f3f2f1;display:flex;flex-direction:column}
h2,h3,h4,h5,p,ul{margin:0;padding:0;font-weight:400}
svg{display:block;flex:none;overflow:visible}
.defs{position:absolute}
span,b,strong,label{white-space:nowrap}
.k{fill:none;stroke:#3b3a39}
.w{fill:#fff;stroke:#3b3a39}
.b{fill:#83beec;stroke:#0f6cbd}
.g{fill:#c8c6c4;stroke:#797775}
.bolt{fill:#fcc25a;stroke:#d9730d}

.titlebar{flex:none;height:34px;background:#3b3a39;color:#fff;display:flex;align-items:center}
.quick{display:flex;gap:15px;margin:1px 0 0 18px;width:84px}
.doc{width:243px;letter-spacing:-.13px;font-size:11.8px;margin-top:5px}
.doc-caret{margin:2px 0 0 6px}
.top-search{margin-left:211px;width:400px;height:24px;background:#d2d2d2;border-radius:2px;color:#24504b;display:flex;align-items:center;padding-left:17px;gap:11px;font-size:13.3px;letter-spacing:-.1px}
.signin{margin-left:182px;width:46px;letter-spacing:-.2px;font-size:11.8px}
.avatar{margin-top:-1px}
.winbtns{margin:2px 0 0 32px}

.tabs{flex:none;height:32px;background:#fafafa;display:flex;font-size:13.4px;letter-spacing:-.15px;position:relative}
.tab{line-height:32px;height:31px}
.t-file{margin-left:23px;width:58px}
.t-home{width:38px;font-weight:700;letter-spacing:-.6px;border-bottom:3px solid #117865;margin-right:31px}
.t-insert{width:67px}.t-model{width:90px}.t-view{width:61px}.t-opt{width:88px}
.share{font:inherit;margin:4px 6px 0 auto;width:84px;height:24px;border:0;border-radius:4px;background:#117865;color:#fff;display:flex;align-items:center;padding:0 0 0 7px;gap:9px;font-size:12px;letter-spacing:-.4px}
.share svg:last-child{margin-left:-4px}

.ribbon{flex:none;height:94px;background:#fafafa;display:flex;align-items:flex-start;padding-top:4px;color:#333;letter-spacing:-.2px}
.group{height:88px;border-right:1px solid #d2d0ce;display:flex;flex-direction:column;justify-content:space-between}
.group label{text-align:center;font-size:9.3px;line-height:9px;letter-spacing:-.15px}
.row{display:grid;height:76px}
.g-clip{width:161px}
.g-data{width:370px}.g-data .row{grid-template-columns:56px 41px 80px 23px 57px 39px 73px}
.g-query{width:117px}.g-query .row{grid-template-columns:72px 28px 16px}
.g-insert{width:147px}.g-insert .row{grid-template-columns:55px 25px 66px}
.g-calc{width:115px}.g-calc .row{grid-template-columns:66px 32px 16px}
.g-sens{width:74px}.g-share{width:60px}.g-copilot{width:59px}
.btn{display:flex;flex-direction:column;align-items:center;min-width:0;padding-top:6px;line-height:16px;font-size:11.5px}
.ico{height:34px}
/* optical centring of lopsided icons */
.r1{margin-left:2px}
.r2{margin-left:4px}
.r3{margin-left:6px}
.l1{margin-right:2px}
.cv{display:inline-block;margin:0 0 1px 2px}
.solo .cv{margin:0}
.off{color:#bdbbb9}
.clip{display:flex;padding-left:14px}
.clip .ico{margin:0 -3px 0 3px}
.clip-list{display:flex;flex-direction:column;gap:8px;padding:4px 0 0 10px;color:#bdbbb9}
.clip-list span{display:flex;align-items:center;gap:3px;height:16px;font-size:11.6px}
.clip-list span:first-child svg{margin-right:1px}
.collapse{margin:78px 0 0 249px}

.work{position:relative;flex:none;height:543px;display:flex;box-shadow:inset 0 3px 3px -2px #bbb}
.rail{width:41px;border-right:1px solid #e1dfdd;display:flex;flex-direction:column}
.rail div{height:40px;display:flex;align-items:center;justify-content:center;padding-left:2px}
.rail div:last-child{padding-left:0}
.rail .active{border-left:3px solid #117865;padding:0}
.center{width:963px;display:flex;flex-direction:column}
.stage{height:508px;display:flex;background:#fff}
.canvas{position:relative;width:930px;height:508px;overflow:hidden}
.frame{position:absolute;left:20px;top:0}
.filters{width:33px;border-left:1px solid #a19f9d;display:flex;flex-direction:column;align-items:center;padding-top:13px}
.funnel{margin:16px 0 0 3px}
.filters span{writing-mode:vertical-rl;font-size:14.5px;font-weight:600;margin-top:8px;letter-spacing:-.05px}

/* report visuals placed on the free-form canvas */
.v{position:absolute;background:#afdcd5;border:1px solid #2f4542}
.v>svg{width:100%;height:100%}
.banner{left:21px;top:0;width:877px;height:44px;font-size:20.6px;line-height:39px;text-align:center}
.s-gender{left:28px;top:52px;width:222px;height:73px}
.s-partner{left:267px;top:52px;width:125px;height:73px}
.s-contract{left:399px;top:52px;width:132px;height:73px}
.s-pay{left:552px;top:49px;width:207px;height:80px}
.pie{left:28px;top:147px;width:221px;height:152px}
.line{left:267px;top:147px;width:264px;height:152px}
.bars{left:552px;top:147px;width:216px;height:152px}
.cols{left:21px;top:325px;width:228px;height:166px}
.donut{left:267px;top:325px;width:264px;height:166px}
.multi{left:552px;top:325px;width:216px;height:166px;padding:4px 0 0 3px}
.c1{left:778px;top:49px;width:123px;height:80px}
.c2{left:778px;top:138px;width:123px;height:85px}
.c3{left:778px;top:238px;width:123px;height:75px}
.c4{left:778px;top:325px;width:123px;height:77px}
.c5{left:778px;top:419px;width:127px;height:73px}

.slicer{overflow:hidden;padding:3px 9px 0 9px}
.slicer h3{display:flex;justify-content:space-between;align-items:center;height:13px;font:400 9.3px/12px Roboto,sans-serif;letter-spacing:.35px;color:#111;padding-bottom:1px}
.slicer h3 svg{fill:none;stroke:#605e5c;stroke-width:.9;margin-top:-1px}
.slicer ul{list-style:none;height:52px;overflow:hidden;margin-left:0}
.slicer li{display:flex;align-items:center;gap:5px;height:20px;font-size:10.5px;white-space:nowrap;letter-spacing:.02px}
.slicer li::before{content:"";width:11px;height:11px;border:1px solid #86918f}
.s-pay ul{height:60px}
.s-pay li{letter-spacing:-.07px}
.s-gender{width:221px}
.sb{position:absolute;right:4px;top:16px;width:5px;height:44px;background:#a9bfba}

.tb,.tm,.num,.at,.lb{font-family:Roboto,sans-serif}
.tb{font-size:11.2px;font-weight:700;fill:#252423}
.tm{font-size:10.8px;fill:#1c1b1a;stroke:#1c1b1a;stroke-width:.15}
.num{font-size:37.8px;fill:#252423;stroke:#252423;stroke-width:.5}
.lb{font-family:"Open Sans",sans-serif;font-size:7.9px;fill:#647a76}
.at{font-size:7.4px;fill:#34423f}
.lg{font-size:9px;fill:#252423}
.lg.b{font-weight:700;stroke:none;fill:#111}
.lg.gy,.lg.b.gy{fill:#4c5654}
.ld{fill:none;stroke:#8ba5a0;stroke-width:.8}
.gr{fill:none;stroke:#bfcfc6;stroke-width:.8;stroke-dasharray:1.500 3}

.entry{border-left:2px solid #a9bfba;padding-left:6.500px;height:43px;margin-bottom:14px;display:flex;flex-direction:column}
.entry b{font:400 9.6px/10px Roboto,sans-serif;color:#3257a8;letter-spacing:.2px}
.entry strong{font:400 11px/14px Roboto,sans-serif;padding-top:6px;letter-spacing:-.2px}
.entry span{font:400 10.8px/14px Roboto,sans-serif;color:#5d6f6b;letter-spacing:.16px}

.pagebar{height:35px;background:#f3f2f1;display:flex}
.desk{margin-left:10px;width:24px;height:31px;border-bottom:3px solid #117865;padding:6px 0 0 1px}
.phone{margin:5px 0 0 25px}
.arrows{margin:14px 0 0 21px}
.ptab{margin-left:5px;width:77px;height:35px;background:#fff;border-left:1px solid #979593;border-bottom:4px solid #117865;text-align:center;line-height:37px;letter-spacing:-.2px}
.plus{width:39px;background:#117865;display:flex;align-items:center;justify-content:center}

.viz{width:182px;border-left:1px solid #e1dfdd;border-right:1px solid #d2d0ce;padding-top:9px}
.viz h2,.data h2{height:19px;display:flex;justify-content:space-between;align-items:center;font-size:15px;line-height:18px;font-weight:600;letter-spacing:-.05px;padding:0 7px 0 8px}
.viz h2{letter-spacing:0}
.viz h2 svg,.data h2 svg{margin-top:1px}
.viz h4{font-size:11.8px;line-height:15px;font-weight:600;letter-spacing:-.28px;padding:10px 0 1px 8px}
.modes{display:flex;padding:3px 0 0 8px;gap:38px;align-items:center}
.mode{width:32px;height:32px;background:#d2d0ce;border-radius:2px;display:flex;align-items:center;justify-content:center}
.notch{margin-top:4px}
.icons{display:grid;grid-template-columns:repeat(6,18px);grid-auto-rows:18px;gap:10px;padding:11px 0 0 11px}
.icons svg{width:18px;height:18px}
.dots{font-weight:600;font-size:14px;line-height:14px;height:16px;margin-top:7px;padding-left:12px;letter-spacing:2.2px;color:#444}
.wells{border-top:1px solid #d2d0ce;margin-top:14px;padding:8px 6px 0 4px;font-size:11.4px;line-height:18px;letter-spacing:.01px}
.wells p{padding-left:8px}
.well{height:27px;margin-top:5px;background:#fff;border:1px dashed #b3b0ad;border-radius:2px;padding-left:10px;line-height:26px;white-space:nowrap}
.wells h5{font-size:11.6px;font-weight:600;padding:10px 0 0 8px;color:#444;letter-spacing:-.12px}
.opt{display:flex;justify-content:space-between;padding:0 16px 0 8px;height:27px;align-items:center;line-height:16px}
.wells h5+.opt{margin-top:2px}
.tog{font-style:normal;font-size:9.5px;width:32px;height:16px;border:1px solid #605e5c;border-radius:8px;background:#fff;display:flex;align-items:center;justify-content:center;gap:2px;letter-spacing:-.2px}
.tog i{width:8px;height:8px;border-radius:4px;background:#605e5c}
.tog.on{background:#117865;border-color:#117865;color:#fff;gap:4px}
.tog.on i{background:#fff}
.well.low{padding-left:8px;letter-spacing:.06px}
.data{width:180px;padding-top:9px}
.dsearch{margin:17px 4px 0;height:27px;border:1px solid #605e5c;border-radius:2px;display:flex;align-items:center;gap:7px;padding-left:7px;font-size:12.8px;color:#444}
.tree{display:flex;align-items:center;height:18px;margin:12px 0 0 15px;font-size:11.7px;letter-spacing:-.18px}
.tbl{margin:0 6px 0 7px}
.watermark{position:absolute;left:1073px;top:490px;color:rgba(135,135,135,.65);white-space:nowrap}
.watermark div{font-size:18.6px;line-height:24px;letter-spacing:.28px}
.watermark p{font-size:13.8px;line-height:21px;letter-spacing:.27px}

.status{flex:none;height:25px;border-top:1px solid #e1dfdd;border-bottom:1px solid #000;display:flex;justify-content:space-between;align-items:center;padding:1px 18px 0 4px;font-size:11.7px;line-height:16px;letter-spacing:-.05px}
.zoom{display:flex;align-items:center}
.zoom span{margin:0 19px 0 18px;width:24px;letter-spacing:-.3px}
.taskbar{flex:none;height:40px;background:linear-gradient(90deg,#223840,#24363f 40%,#1c2d3a 75%,#1a2c3c);display:flex;align-items:center;color:#fff}
.start{width:48px;display:flex;justify-content:center}
.tsearch{width:288px;height:40px;background:#f2f2f2;border:1px solid #b5b5b5;color:#333;display:flex;align-items:center;gap:11px;padding-left:11px;font-size:14px;letter-spacing:-.03px}
.bags{margin:0 8px 0 auto}
.tv{margin-left:16px}.edge{margin-left:29px}.mail{margin-left:25px}.fold{margin-left:26px}.vlc{margin-left:27px}.chrome{margin-left:26px}
.pbi{margin-left:13px;width:48px;height:40px;background:#4d5f69;border-bottom:2px solid #76b9ed;display:flex;align-items:center;justify-content:center;padding-top:1px}
.tray{display:flex;align-items:center;margin-left:312px;width:374px}
.temp{margin-left:8px;width:93px;font-size:13.3px;letter-spacing:.18px}
.wifi{margin-left:13px}.vol{margin-left:7px}.bat{margin-left:7px}
.eng{margin-left:10px;width:36px;font-size:12px;letter-spacing:-.4px}
.clock{width:58px;display:flex;flex-direction:column;align-items:center;font-size:11.6px;line-height:18px;letter-spacing:-.3px}
.note{margin-left:18px}
```
